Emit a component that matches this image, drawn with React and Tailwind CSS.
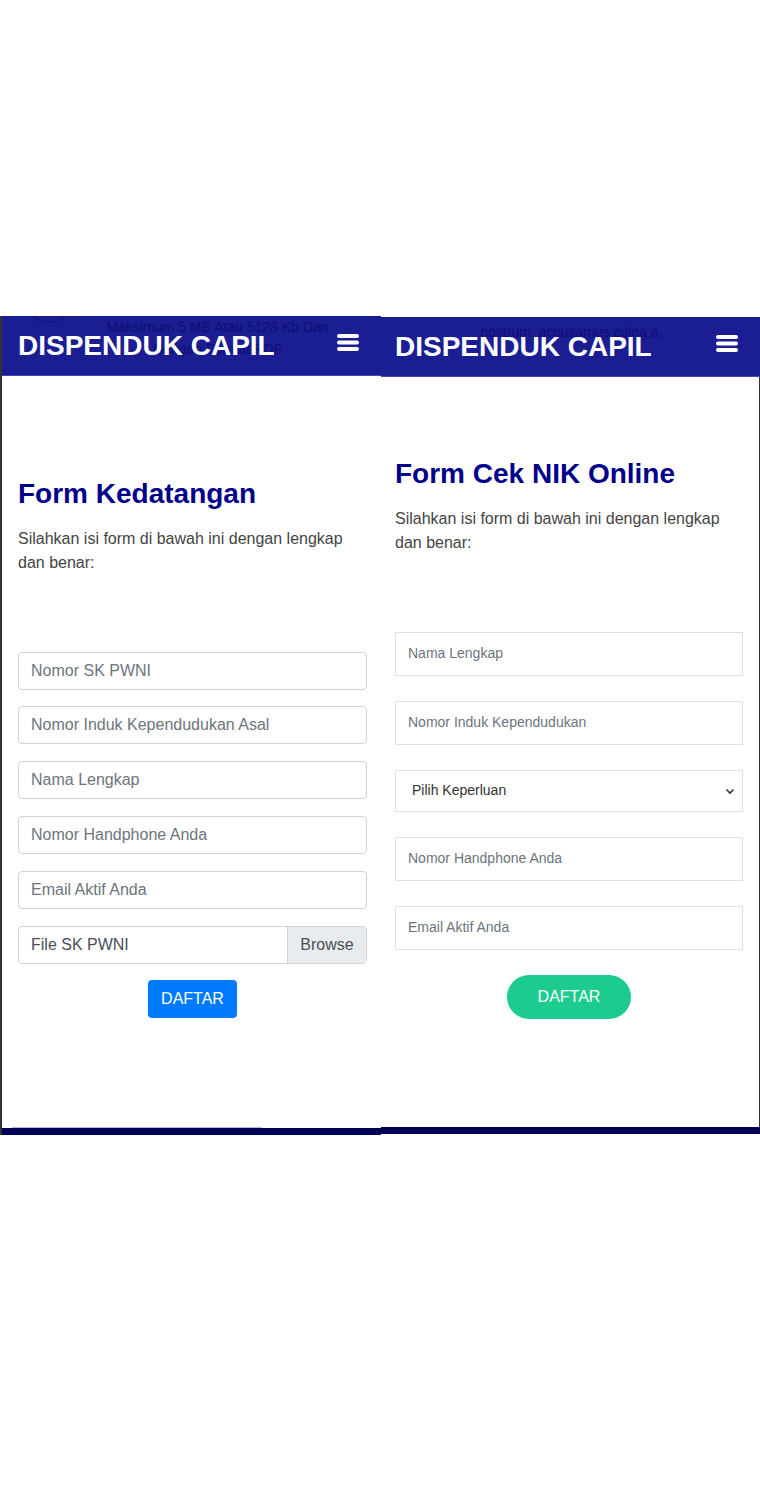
import React from 'react';

const font = { fontFamily: '"Liberation Sans", Arial, sans-serif' };

function Bars() {
  return (
    <svg width="22" height="18" viewBox="0 0 22 18" className="shrink-0">
      <rect x="0" y="0" width="22" height="4" rx="2" fill="#fff" />
      <rect x="0" y="6.5" width="22" height="4" rx="2" fill="#fff" />
      <rect x="0" y="13" width="22" height="4" rx="2" fill="#fff" />
    </svg>
  );
}

function Header({ ghost, ghost2, arc, ghostClass, padClass }) {
  return (
    <div className={`relative h-[60px] bg-[#1b1d93] border-b border-[#4446ad] flex items-center justify-between pr-[22px] overflow-hidden ${padClass}`}>
      {arc && (
        <svg className="absolute left-[22px] top-[-40px]" width="50" height="48" viewBox="0 0 50 48">
          <circle cx="25" cy="22" r="24" fill="none" stroke="#121480" strokeWidth="1.5" />
        </svg>
      )}
      <div className={`absolute inset-x-0 text-center text-[14px] leading-[20px] text-[#0d0f73] ${ghostClass}`}>
        <div>{ghost}</div>
        {ghost2 && <div className="mt-[2px]">{ghost2}</div>}
      </div>
      <span className="relative text-white font-bold text-[28px] leading-none">DISPENDUK CAPIL</span>
      <span className="relative -mt-[6px]">
        <Bars />
      </span>
    </div>
  );
}

function Lead({ title }) {
  return (
    <>
      <h2 className="text-[28px] leading-[33.6px] font-bold text-[#00008b]">{title}</h2>
      <p className="mt-4 text-[16px] leading-[24px] text-[#444]">
        Silahkan isi form di bawah ini dengan lengkap dan benar:
      </p>
    </>
  );
}

function LeftPanel() {
  const fields = ['Nomor SK PWNI', 'Nomor Induk Kependudukan Asal', 'Nama Lengkap', 'Nomor Handphone Anda', 'Email Aktif Anda'];
  return (
    <div className="w-[381px] flex flex-col border-l-2 border-[#333]">
      <Header
        ghost="Maksimum 5 MB Atau 5128 Kb Dan"
        ghost2="Dengan Format PDF"
        arc
        ghostClass="top-[1px] pl-[52px]"
        padClass="pl-[16px]"
      />
      <div className="h-[751px] pt-[101px] pl-[16px] pr-[14px]">
        <Lead title="Form Kedatangan" />
        <div className="mt-[77px] flex flex-col gap-[16.8px]">
          {fields.map((f) => (
            <div
              key={f}
              className="h-[38px] border border-[#ced4da] rounded-[4px] bg-white px-3 flex items-center text-[16px] text-[#6c757d]"
            >
              {f}
            </div>
          ))}
          <div className="h-[38px] border border-[#ced4da] rounded-[4px] bg-white flex items-stretch text-[16px] text-[#495057] overflow-hidden">
            <span className="flex-1 px-3 flex items-center">File SK PWNI</span>
            <span className="w-[79px] bg-[#e9ecef] border-l border-[#ced4da] flex items-center justify-center">Browse</span>
          </div>
        </div>
        <div className="mt-4 flex justify-center">
          <button className="h-[38px] w-[89px] rounded-[4px] bg-[#007bff] text-white text-[16px]">DAFTAR</button>
        </div>
      </div>
      <div className="h-px bg-[#b9b9d9] mx-[10px] w-[250px]" />
      <div className="h-[7px] bg-[#000055]" />
    </div>
  );
}

function RightPanel() {
  const Input = ({ children }) => (
    <div className="h-[44px] border border-[#dcdfe4] bg-white pl-3 flex items-center text-[14px] text-[#6c757d]">
      {children}
    </div>
  );
  return (
    <div className="w-[379px] flex flex-col pt-px">
      <Header ghost="nostrum, accusamus culpa a." ghostClass="top-[5px] pl-[2px]" padClass="pl-[14px]" />
      <div className="h-[750px] pt-[80px] pl-[14px] pr-[16px] border-r border-[#333]">
        <Lead title="Form Cek NIK Online" />
        <div className="mt-[77px] flex flex-col gap-[25px]">
          <Input>Nama Lengkap</Input>
          <Input>Nomor Induk Kependudukan</Input>
          <div className="h-[42px] border border-[#dcdfe4] bg-white pl-4 pr-[7px] flex items-center justify-between text-[14px] text-[#333]">
            <span>Pilih Keperluan</span>
            <svg width="10" height="10" viewBox="0 0 10 10">
              <path d="M1.5 3.5 L5 7 L8.5 3.5" fill="none" stroke="#333" strokeWidth="1.6" />
            </svg>
          </div>
          <Input>Nomor Handphone Anda</Input>
          <Input>Email Aktif Anda</Input>
        </div>
        <div className="mt-[25px] flex justify-center">
          <button className="h-[44px] w-[124px] rounded-full bg-[#1bcc8e] text-white text-[16px]">DAFTAR</button>
        </div>
      </div>
      <div className="h-[7px] bg-[#000055]" />
    </div>
  );
}

export default function App() {
  return (
    <div className="w-[760px] h-[1506px] bg-white pt-[316px]" style={font}>
      <div className="flex">
        <LeftPanel />
        <RightPanel />
      </div>
    </div>
  );
}
